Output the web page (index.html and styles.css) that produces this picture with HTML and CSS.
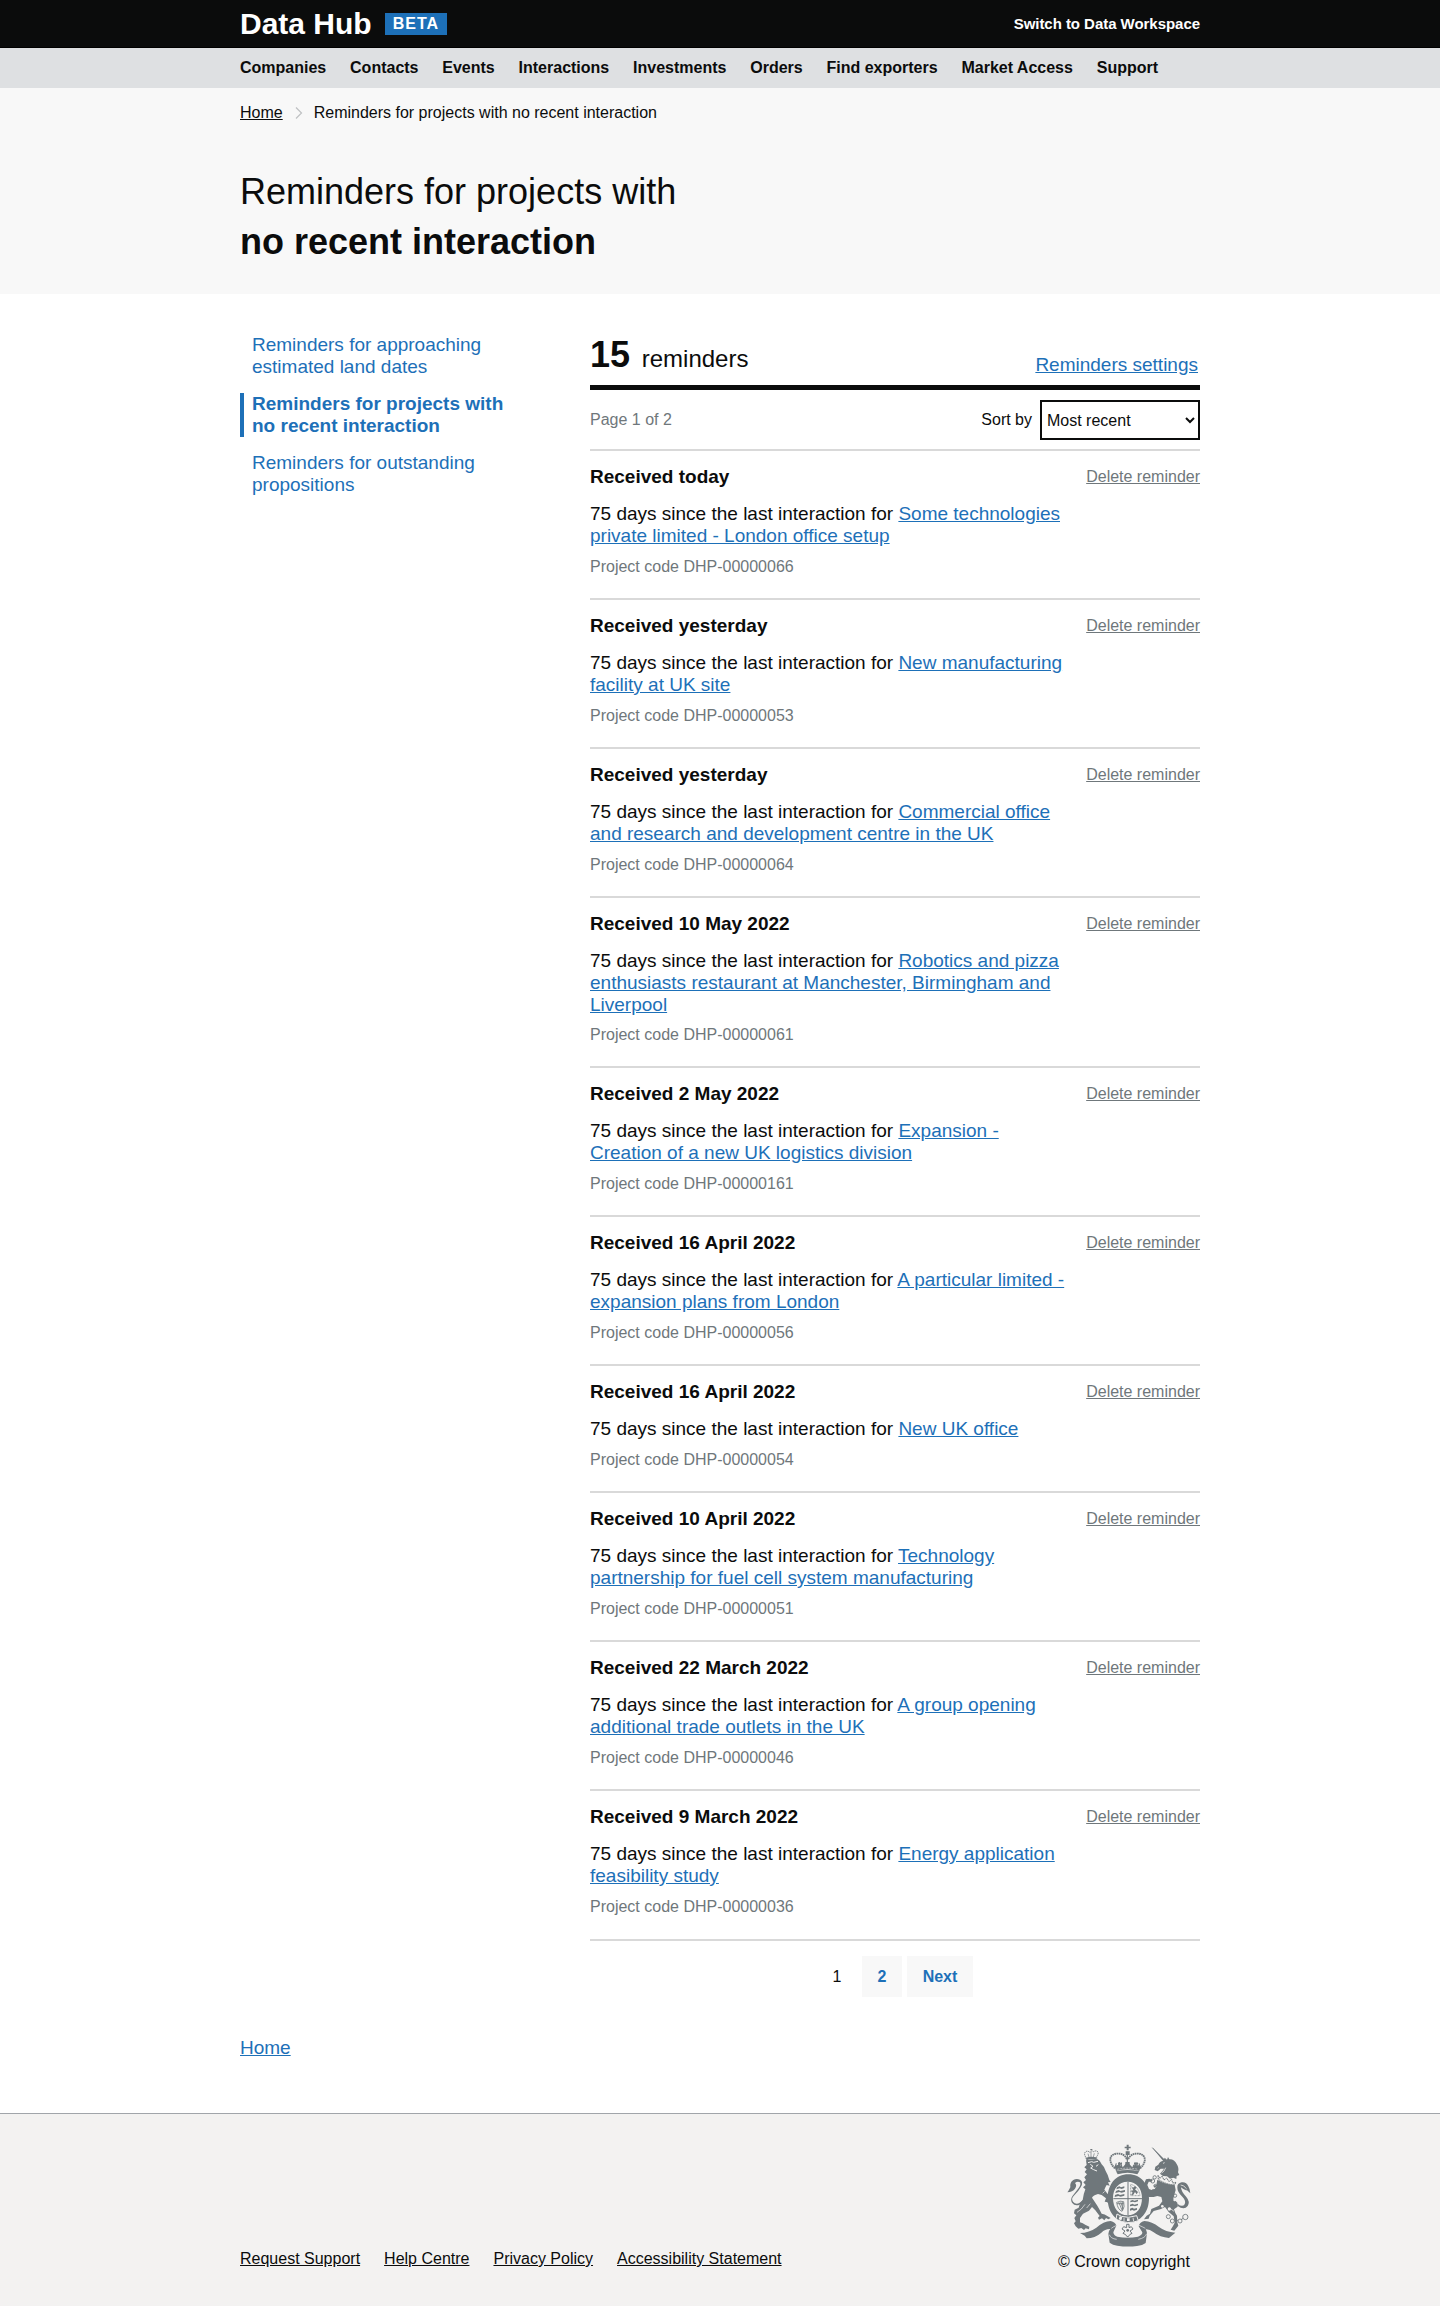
FILE: index.html
```html
<!DOCTYPE html>
<html lang="en">
<head>
<meta charset="utf-8">
<title>Reminders for projects with no recent interaction - Data Hub</title>
<link rel="stylesheet" href="styles.css">
</head>
<body>
<header class="topbar">
  <div class="container topbar-inner">
    <a class="brand" href="#">Data Hub</a>
    <strong class="tag">BETA</strong>
    <a class="switch" href="#">Switch to Data Workspace</a>
  </div>
</header>
<nav class="mainnav">
  <div class="container mainnav-list">
    <a href="#">Companies</a><a href="#">Contacts</a><a href="#">Events</a><a href="#">Interactions</a><a href="#">Investments</a><a href="#">Orders</a><a href="#">Find exporters</a><a href="#">Market Access</a><a href="#">Support</a>
  </div>
</nav>
<div class="hero">
  <div class="container">
    <div class="breadcrumbs">
      <a href="#">Home</a>
      <svg width="8" height="14" viewBox="0 0 8 14"><path d="M1 1.5L6.5 7L1 12.5" fill="none" stroke="#bfc1c3" stroke-width="1.2"/></svg>
      <span>Reminders for projects with no recent interaction</span>
    </div>
    <h1>Reminders for projects with<br><strong>no recent interaction</strong></h1>
  </div>
</div>
<main class="container">
  <div class="columns">
    <nav class="sidenav">
      <a href="#">Reminders for approaching estimated land dates</a>
      <a class="active" href="#">Reminders for projects with no recent interaction</a>
      <a href="#">Reminders for outstanding propositions</a>
    </nav>
    <section class="results">
      <div class="summary">
        <h2><strong>15</strong> reminders</h2>
        <a class="link" href="#">Reminders settings</a>
      </div>
      <div class="toolbar">
        <span class="muted">Page 1 of 2</span>
        <label class="sort">Sort by <select><option>Most recent</option></select></label>
      </div>

      <article class="reminder">
        <div class="reminder-head"><h3>Received today</h3><a class="delete" href="#">Delete reminder</a></div>
        <p class="reminder-body">75 days since the last interaction for <a class="link" href="#">Some technologies private limited - London office setup</a></p>
        <p class="code">Project code DHP-00000066</p>
      </article>
      <article class="reminder">
        <div class="reminder-head"><h3>Received yesterday</h3><a class="delete" href="#">Delete reminder</a></div>
        <p class="reminder-body">75 days since the last interaction for <a class="link" href="#">New manufacturing facility at UK site</a></p>
        <p class="code">Project code DHP-00000053</p>
      </article>
      <article class="reminder">
        <div class="reminder-head"><h3>Received yesterday</h3><a class="delete" href="#">Delete reminder</a></div>
        <p class="reminder-body">75 days since the last interaction for <a class="link" href="#">Commercial office and research and development centre in the UK</a></p>
        <p class="code">Project code DHP-00000064</p>
      </article>
      <article class="reminder reminder-long">
        <div class="reminder-head"><h3>Received 10 May 2022</h3><a class="delete" href="#">Delete reminder</a></div>
        <p class="reminder-body">75 days since the last interaction for <a class="link" href="#">Robotics and pizza enthusiasts restaurant at Manchester, Birmingham and Liverpool</a></p>
        <p class="code">Project code DHP-00000061</p>
      </article>
      <article class="reminder">
        <div class="reminder-head"><h3>Received 2 May 2022</h3><a class="delete" href="#">Delete reminder</a></div>
        <p class="reminder-body">75 days since the last interaction for <a class="link" href="#">Expansion - Creation of a new UK logistics division</a></p>
        <p class="code">Project code DHP-00000161</p>
      </article>
      <article class="reminder">
        <div class="reminder-head"><h3>Received 16 April 2022</h3><a class="delete" href="#">Delete reminder</a></div>
        <p class="reminder-body">75 days since the last interaction for <a class="link" href="#">A particular limited - expansion plans from London</a></p>
        <p class="code">Project code DHP-00000056</p>
      </article>
      <article class="reminder">
        <div class="reminder-head"><h3>Received 16 April 2022</h3><a class="delete" href="#">Delete reminder</a></div>
        <p class="reminder-body">75 days since the last interaction for <a class="link" href="#">New UK office</a></p>
        <p class="code">Project code DHP-00000054</p>
      </article>
      <article class="reminder">
        <div class="reminder-head"><h3>Received 10 April 2022</h3><a class="delete" href="#">Delete reminder</a></div>
        <p class="reminder-body">75 days since the last interaction for <a class="link" href="#">Technology partnership for fuel cell system manufacturing</a></p>
        <p class="code">Project code DHP-00000051</p>
      </article>
      <article class="reminder">
        <div class="reminder-head"><h3>Received 22 March 2022</h3><a class="delete" href="#">Delete reminder</a></div>
        <p class="reminder-body">75 days since the last interaction for <a class="link" href="#">A group opening additional trade outlets in the UK</a></p>
        <p class="code">Project code DHP-00000046</p>
      </article>
      <article class="reminder reminder-last">
        <div class="reminder-head"><h3>Received 9 March 2022</h3><a class="delete" href="#">Delete reminder</a></div>
        <p class="reminder-body">75 days since the last interaction for <a class="link" href="#">Energy application feasibility study</a></p>
        <p class="code">Project code DHP-00000036</p>
      </article>

      <nav class="pagination">
        <span>1</span><a href="#">2</a><a class="next" href="#">Next</a>
      </nav>
    </section>
  </div>
  <a class="link home" href="#">Home</a>
</main>
<footer class="footer">
  <div class="container footer-inner">
    <div class="footer-links">
      <a href="#">Request Support</a><a href="#">Help Centre</a><a href="#">Privacy Policy</a><a href="#">Accessibility Statement</a>
    </div>
    <div class="copyright">
      <svg class="crest" width="125" height="103" viewBox="80 43 375 309" fill="#6f777b">
        <!-- lion's crown -->
        <path d="M136 82Q130 73 135 67Q141 62 149 68Q154 61 160 66Q168 61 173 67Q175 73 169 81L169 89Q152 82 139 91Z" fill="none" stroke="#6f777b" stroke-width="3" stroke-dasharray="4 2"/>
        <path d="M150 58h6v4h-6zM137 84Q152 79 168 83L168 90Q153 85 139 91Z"/>
        <path d="M152 67V82M143 72L146 82M162 71L159 82" stroke="#6f777b" stroke-width="2"/>
        <!-- lion -->
        <path d="M137 92Q154 88 172 89Q181 94 184 104Q193 112 196 124Q204 137 207 151L211 157L203 158L208 168L199 166Q194 174 192 180L202 193Q208 190 215 196L212 202L219 205L211 210L217 216L207 214L208 222L199 217L193 216L197 206L184 196L173 193Q159 197 155 204Q162 214 170 227Q178 240 184 252Q193 252 202 260L211 265L204 269L197 265L192 272L185 266L176 270L173 264L178 259L165 242L155 232L146 243L128 252L119 265L119 278Q127 280 136 286L147 291L146 299L136 296L131 301L123 295L114 297L106 290L101 281L106 275L102 265L108 257L101 251L103 240L115 234L119 221L127 211Q129 194 135 179L128 173L136 166L129 158L137 151L132 143L140 134L133 127L139 119L132 113L139 106Z"/>
        <path d="M143 99L154 96L160 98L173 95M150 104L158 110L151 115L160 120L170 124M174 105L167 110" fill="none" stroke="#f3f2f1" stroke-width="3"/>
        <path d="M110 248L123 238L134 224M150 222L139 235M193 185L187 191" fill="none" stroke="#f3f2f1" stroke-width="2"/>
        <!-- lion's tail -->
        <path d="M128 211Q110 230 98 216Q91 207 102 197Q114 186 121 173Q131 157 119 150Q108 146 99 151Q88 158 90 173Q84 185 81 188Q97 187 104 177Q111 167 104 160Q112 153 119 158Q123 164 115 175Q106 187 97 198Q89 209 95 219Q108 236 130 216Z"/>
        <!-- imperial crown -->
        <path d="M224 116C205 99 204 74 229 72C245 70 256 78 260 90M299 116C319 99 319 74 294 72C279 70 267 78 263 90" fill="none" stroke="#6f777b" stroke-width="5.5" stroke-dasharray="5 1.5"/>
        <path d="M261 66V118M224 113L228 101M238 113V97M287 113V97M300 113L296 101M230 114L235 106L242 114M279 114L286 106L294 114" stroke="#6f777b" stroke-width="3.5" fill="none"/>
        <path d="M259 45h6v6h6v5h-6v6h-6v-6h-6v-5h6zM256 65h12v11h-12zM223 111Q231 101 239 111Q243 97 247 113L261 97L276 113Q280 97 285 111Q293 101 301 111L297 124Q261 114 227 124ZM227 125Q262 117 297 125L291 134Q262 125 232 134Z"/>
        <path d="M233 98l6 3l6-3v7h-12zM281 98l6 3l6-3v7h-12zM255 97h13v12h-13z"/>
        <path d="M231 119Q262 112 293 119" fill="none" stroke="#f3f2f1" stroke-width="1.6" stroke-dasharray="6 3"/>
        <!-- garter -->
        <path fill-rule="evenodd" d="M264 134C303 134 326 165 326 206C326 248 301 278 264 279C226 278 202 248 202 206C202 165 226 134 264 134ZM262 156C235 156 218 177 218 205C218 235 235 257 262 257C289 257 305 235 305 205C305 177 289 156 262 156Z"/>
        <path d="M263 157V256M219 207H305" stroke="#6f777b" stroke-width="3"/>
        <!-- quarterings -->
        <path d="M230 173l7-3l5 3l10-3v5l-8 3l-6-2l-10 3zM227 184l8-3l5 3l14-3v5l-10 3l-7-2l-12 3zM224 196l9-3l6 3l13-3v5l-11 3l-7-2l-11 3zM270 213l7-2l5 2l11-3v5l-9 3l-6-2l-8 2zM269 225l8-3l5 3l11-3v5l-9 3l-6-2l-9 2zM269 237l7-3l5 3l9-2v5l-9 3l-5-2l-7 2z"/>
        <path d="M272 169l6 5l6-5l5 5l-5 5l9 8l-4 7l-5-7l-5 8l-7 2l5-8l-6-6l8-1z"/>
        <path d="M271 164Q295 170 299 198H271Z" fill="none" stroke="#6f777b" stroke-width="2" stroke-dasharray="3 1.5"/>
        <path d="M229 218Q240 212 250 216Q255 232 245 245Q232 240 229 218M235 217L245 241M241 216L248 238M230 222L250 222M247 217V242" fill="none" stroke="#6f777b" stroke-width="2.4"/>
        <!-- garter buckle -->
        <path d="M230 253L243 260Q263 267 289 258L294 273Q263 286 227 269Z" stroke="#f3f2f1" stroke-width="3"/>
        <path d="M238 260l8 3l-3 9l-8-3zM260 266h8v8h-8z" fill="#f3f2f1"/>
        <path d="M251 264v11M278 264l2 11" stroke="#f3f2f1" stroke-width="2.5"/>
        <!-- unicorn's horn and head -->
        <path d="M336 54L375 92L371 97ZM373 84L380 90L383 82L387 89Q402 88 409 103Q417 115 413 128L417 136L409 139L408 148L399 144L389 147L380 140L368 139L359 132L367 123L371 117L361 117L352 125L343 121L345 111L354 105Q358 94 369 93Z"/>
        <path d="M336 54L374 94" stroke="#6f777b" stroke-width="3"/>
        <path d="M368 101l5-2M376 114Q372 126 364 130M352 116l3-2" fill="none" stroke="#f3f2f1" stroke-width="2.3"/>
        <!-- coronet collar -->
        <path d="M353 137L359 146L365 139L371 151L379 145L386 156L394 149L397 160L407 158L402 166Q375 164 354 149Z" fill="none" stroke="#6f777b" stroke-width="3" stroke-dasharray="5 1.5"/>
        <!-- unicorn's body -->
        <path d="M351 150Q374 164 403 166L406 181Q402 194 399 207L411 219L412 231L401 239L405 250L410 258L411 278L414 288L402 303L391 300L398 289L403 279L400 260L385 247L374 232L362 238L340 244L328 258L325 267L311 269L319 258L329 252L333 238L356 228L366 215L363 202L351 199L340 202L326 202L315 196L320 184L314 177L310 165L317 149L327 147L337 151L334 156L325 156L321 166L326 178L334 181L345 177L339 168L348 166Z"/>
        <g fill="#f3f2f1"><circle cx="366" cy="230" r="4"/><circle cx="387" cy="238" r="5"/><circle cx="403" cy="211" r="4"/></g>
        <path d="M349 170L341 177M401 245L388 235" fill="none" stroke="#f3f2f1" stroke-width="2.2"/>
        <!-- chain -->
        <g fill="none" stroke="#6f777b" stroke-width="2.6"><circle cx="343" cy="143" r="5"/><circle cx="337" cy="154" r="6"/><circle cx="339" cy="186" r="6"/><circle cx="345" cy="168" r="4"/><circle cx="404" cy="198" r="5"/><circle cx="384" cy="261" r="6"/><circle cx="396" cy="274" r="6"/><circle cx="419" cy="274" r="6"/><circle cx="435" cy="262" r="8"/><path d="M402 272h11M422 270l7-4"/></g>
        <!-- unicorn's tail -->
        <path d="M411 228Q431 243 442 229Q450 216 438 202Q422 185 422 173Q430 181 440 183L435 177L450 191Q449 178 444 170Q438 156 424 158Q410 161 411 174Q411 187 426 201Q438 213 433 224Q426 234 411 222Z"/>
        <path d="M421 166Q431 166 438 177" fill="none" stroke="#f3f2f1" stroke-width="2.3"/>
        <!-- motto ribbon -->
        <path d="M119 310Q147 309 168 294Q190 275 211 274Q225 278 228 288Q223 298 219 308Q220 318 231 321Q262 327 293 321Q306 317 306 308L295 290Q297 278 312 274Q335 276 356 292Q376 307 405 309L386 325Q359 323 340 308Q327 298 316 299Q319 304 320 311L316 340Q307 347 290 349Q261 353 231 348Q217 346 208 339L204 313Q204 304 210 298Q195 297 183 309Q164 326 139 326L133 318Z"/>
        <path d="M213 296Q219 291 227 288M315 296Q306 291 296 287M207 315Q211 327 229 329M294 329Q315 325 319 312" fill="none" stroke="#f3f2f1" stroke-width="2"/>
        <!-- floral badge -->
        <path d="M259 284h7v10l7-3l5 7l-9 6l6 7l-7 4l-4 6h-4l-4-6l-8-4l6-7l-9-6l5-7l9 3z" fill="none" stroke="#6f777b" stroke-width="3"/>
        <circle cx="262" cy="302" r="4"/>
      </svg>
      <div>© Crown copyright</div>
    </div>
  </div>
</footer>
</body>
</html>
```
FILE: styles.css
```css
* { box-sizing: border-box; }
body { margin: 0; font: 16px/20px "Liberation Sans", Arial, sans-serif; color: #0b0c0c; background: #fff; }
h1, h2, h3, p { margin: 0; font-weight: 400; }
a { color: inherit; text-decoration: none; }
.container { width: 960px; margin: 0 auto; }

.topbar { height: 48px; background: #0b0c0c; border-bottom: 1px solid #000; color: #fff; }
.topbar-inner { display: flex; align-items: center; height: 47px; }
.brand { font-size: 30px; font-weight: 700; line-height: 47px; }
.tag { height: 22px; width: 62px; margin: 1px 0 0 13px; padding-left: 8px; background: #1d70b8; font-size: 16px; line-height: 22px; letter-spacing: 1px; }
.switch { margin-left: auto; font-size: 15px; font-weight: 700; letter-spacing: -0.04px; }

.mainnav { height: 40px; background: #dee0e2; font-weight: 700; }
.mainnav-list { display: flex; gap: 23.8px; line-height: 40px; }

.hero { height: 206px; background: #f8f8f8; }
.breadcrumbs { display: flex; align-items: center; height: 49px; }
.breadcrumbs a { text-decoration: underline; }
.breadcrumbs svg { margin: 0 11px 0 12px; }
h1 { font-size: 36px; line-height: 50px; padding-top: 30px; }

.columns { display: flex; justify-content: space-between; }
.link { color: #1d70b8; font-size: 19px; line-height: 22px; text-decoration: underline; }
.muted, .code, .delete { color: #6f777b; }

.sidenav { width: 275px; padding-top: 40px; display: flex; flex-direction: column; gap: 15px; font-size: 19px; line-height: 22px; color: #1d70b8; }
.sidenav a { padding-left: 8px; border-left: 4px solid transparent; }
.sidenav .active { font-weight: 700; border-color: #1d70b8; }

.results { width: 610px; }
.summary { height: 96px; display: flex; justify-content: space-between; align-items: flex-end; border-bottom: 5px solid #0b0c0c; }
.summary h2 { font-size: 24px; line-height: 40px; padding-bottom: 6px; }
.summary h2 strong { font-size: 36px; margin-right: 5px; }
.summary .link { margin: 0 2px 9px 0; }
.toolbar { height: 61px; display: flex; justify-content: space-between; align-items: center; padding-top: 1px; border-bottom: 2px solid #d9d9d9; }
.sort { display: flex; align-items: center; gap: 8px; }
.sort select { width: 160px; height: 40px; margin: 0; padding: 0 1px; border: 2px solid #0b0c0c; border-radius: 0; background: #fff; color: #0b0c0c; font: 16px "Liberation Sans", Arial, sans-serif; }

.reminder { padding: 15px 0 21px; border-bottom: 2px solid #d9d9d9; }
.reminder-last { padding-bottom: 22px; }
.reminder-head { display: flex; justify-content: space-between; height: 22px; }
h3 { font-size: 19px; line-height: 22px; font-weight: 700; }
.delete { line-height: 22px; text-decoration: underline; }
.reminder-body { width: 478px; margin: 15px 0 10px; font-size: 19px; line-height: 22px; }
.reminder-long .reminder-body { margin-bottom: 9px; }

.pagination { display: flex; justify-content: center; gap: 5px; padding-top: 15px; line-height: 41px; text-align: center; }
.pagination span, .pagination a { width: 40px; height: 41px; }
.pagination a { background: #f8f8f8; color: #1d70b8; font-weight: 700; }
.pagination .next { width: 66px; }
.home { display: block; width: max-content; margin: 40px 0 54px; }

.footer { height: 193px; background: #f3f2f1; border-top: 1px solid #a1a5aa; }
.footer-inner { display: flex; justify-content: space-between; }
.footer-links { display: flex; gap: 24px; padding-top: 135px; }
.footer-links a { text-decoration: underline; }
.copyright { display: flex; flex-direction: column; padding: 30px 8px 0 0; }
.crest { display: block; margin: 0 0 5px 9px; }
```
